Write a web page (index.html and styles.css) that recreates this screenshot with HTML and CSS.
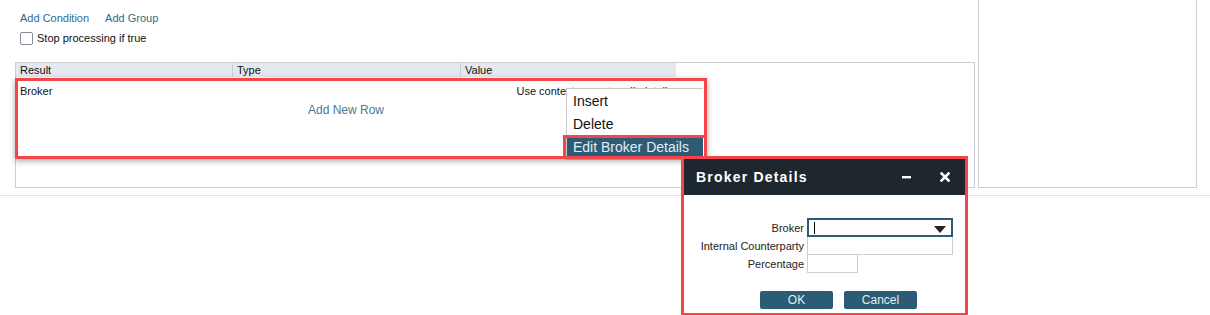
FILE: index.html
```html
<!DOCTYPE html>
<html lang="en">
<head>
    <meta charset="UTF-8">
    <meta name="viewport" content="width=device-width, initial-scale=1.0">
    <title>Rule Editor</title>
    <link rel="stylesheet" href="styles.css">
</head>
<body>
    <div class="page">
        <div class="main">
            <div class="links">
                <a href="#">Add Condition</a>
                <a href="#">Add Group</a>
            </div>
            <label class="stop">
                <span class="box"></span>
                Stop processing if true
            </label>

            <div class="grid">
                <div class="grid-head">
                    <div class="col col-result">Result</div>
                    <div class="col col-type">Type</div>
                    <div class="col col-value">Value</div>
                </div>
                <div class="grid-row">
                    <div class="col col-result">Broker</div>
                    <div class="col col-type"></div>
                    <div class="col col-value hint">Use context menu to edit details</div>
                </div>
                <div class="add-row">Add New Row</div>
            </div>
        </div>
        <div class="side"></div>
    </div>

    <!-- menu contextual -->
    <ul class="menu">
        <li>Insert</li>
        <li>Delete</li>
        <li class="active">Edit Broker Details</li>
    </ul>

    <!-- marcas rojas -->
    <div class="mark mark-grid"></div>
    <div class="mark mark-item"></div>

    <div class="dialog">
        <div class="dialog-head">
            <span class="dialog-title">Broker Details</span>
            <span class="dialog-btns">
                <svg width="9" height="3" viewBox="0 0 9 3"><rect width="9" height="2.4" fill="#fff"/></svg>
                <svg width="10" height="10" viewBox="0 0 10 10"><path d="M1.5 1.5 L8.5 8.5 M8.5 1.5 L1.5 8.5" stroke="#fff" stroke-width="2.6" stroke-linecap="square"/></svg>
            </span>
        </div>
        <div class="dialog-body">
            <div class="field">
                <label>Broker</label>
                <div class="select">
                    <span class="caret"></span>
                    <svg class="arrow" width="12" height="7" viewBox="0 0 12 7"><path d="M0 0 H12 L6 7 Z" fill="#222"/></svg>
                </div>
            </div>
            <div class="field">
                <label>Internal Counterparty</label>
                <div class="input"></div>
            </div>
            <div class="field">
                <label>Percentage</label>
                <div class="input small"></div>
            </div>
            <div class="actions">
                <button>OK</button>
                <button>Cancel</button>
            </div>
        </div>
    </div>
</body>
</html>
```

FILE: styles.css
```css
body {
    font-family: "Liberation Sans", Arial, sans-serif;
    margin: 0;
    background-color: #fff;
    color: #111;
}

.page {
    display: flex;
    gap: 3px;
    height: 195px;
    padding: 0 13px 0 15px;
    border-bottom: 1px solid #e3e3e3;
}

.main {
    width: 960px;
}

.links {
    display: flex;
    gap: 16px;
    padding: 12px 0 0 5px;
    height: 14px;
    font-size: 11px;
    line-height: 13px;
}

.links a {
    color: #2f6a8c;
    text-decoration: none;
}

.stop {
    display: flex;
    align-items: center;
    gap: 4px;
    margin: 5px 0 0 5px;
    font-size: 11px;
    height: 14px;
}

.box {
    width: 11px;
    height: 11px;
    border: 1.5px solid #8a8a96;
    border-radius: 2px;
}

.grid {
    margin-top: 17px;
    height: 124px;
    border: 1px solid #c9cfd7;
    font-size: 11px;
}

.grid-head,
.grid-row {
    display: flex;
    width: 660px;
}

.grid-head {
    height: 14px;
    background-color: #e6e8ef;
}

.grid-head .col {
    line-height: 15px;
    border-right: 1px solid #c9cfd7;
}

.grid-head .col-value {
    border-right: none;
}

.col {
    padding-left: 4px;
    box-sizing: border-box;
}

.col-result { width: 217px; }
.col-type { width: 228px; }
.col-value { width: 215px; }

.grid-row {
    padding-top: 8px;
    line-height: 13px;
}

.hint {
    text-align: right;
    padding-right: 3px;
    white-space: nowrap;
}

.add-row {
    width: 660px;
    text-align: center;
    font-size: 12px;
    color: #4a7892;
    margin-top: 5px;
}

.side {
    width: 217px;
    height: 187px;
    border: 1px solid #c9cfd7;
    border-top: none;
}

.menu {
    position: absolute;
    left: 566px;
    top: 88px;
    width: 136px;
    margin: 0;
    padding: 1px 0 0;
    list-style: none;
    background-color: #fff;
    border: 1px solid #c8c8c8;
    border-right: none;
    font-size: 14px;
}

.menu li {
    height: 23px;
    line-height: 23px;
    padding-left: 6px;
}

.menu li.active {
    background-color: #2c5c75;
    color: #e4ecf1;
}

.mark {
    position: absolute;
    border: 3px solid #f4454b;
    box-shadow: 0 2px 6px rgba(0, 0, 0, 0.35);
    box-sizing: border-box;
}

.mark-grid {
    left: 15px;
    top: 78px;
    width: 692px;
    height: 81px;
}

.mark-item {
    left: 563px;
    top: 135px;
    width: 144px;
    height: 24px;
    box-shadow: none;
}

.dialog {
    position: absolute;
    left: 681px;
    top: 156px;
    width: 287px;
    height: 160px;
    box-sizing: border-box;
    border: 3px solid #f4454b;
    background-color: #fff;
}

.dialog-head {
    display: flex;
    justify-content: space-between;
    align-items: center;
    height: 36px;
    padding: 0 15px 0 12px;
    background-color: #1f272e;
    color: #fff;
}

.dialog-title {
    font-weight: bold;
    font-size: 14px;
    letter-spacing: 1.2px;
}

.dialog-btns {
    display: flex;
    align-items: center;
    gap: 29px;
}

.dialog-body {
    padding-top: 23px;
    font-size: 11px;
}

.field {
    display: flex;
    align-items: center;
}

.field label {
    width: 120px;
    padding-right: 3px;
    text-align: right;
    color: #222;
}

.select {
    position: relative;
    width: 146px;
    height: 19px;
    box-sizing: border-box;
    border: 2px solid #2c5c75;
}

.caret {
    position: absolute;
    left: 5px;
    top: 2px;
    width: 1px;
    height: 12px;
    background-color: #000;
}

.arrow {
    position: absolute;
    right: 5px;
    top: 6px;
}

.input {
    width: 146px;
    height: 18px;
    box-sizing: border-box;
    border: 1px solid #c9cfd7;
    border-top: none;
}

.input.small {
    width: 51px;
}

.actions {
    display: flex;
    gap: 11px;
    margin: 18px 0 0 76px;
}

.actions button {
    width: 73px;
    height: 18px;
    padding: 0;
    border: none;
    border-radius: 2px;
    background-color: #2c5c75;
    color: #e4ecf1;
    font-family: inherit;
    font-size: 12px;
}
```
